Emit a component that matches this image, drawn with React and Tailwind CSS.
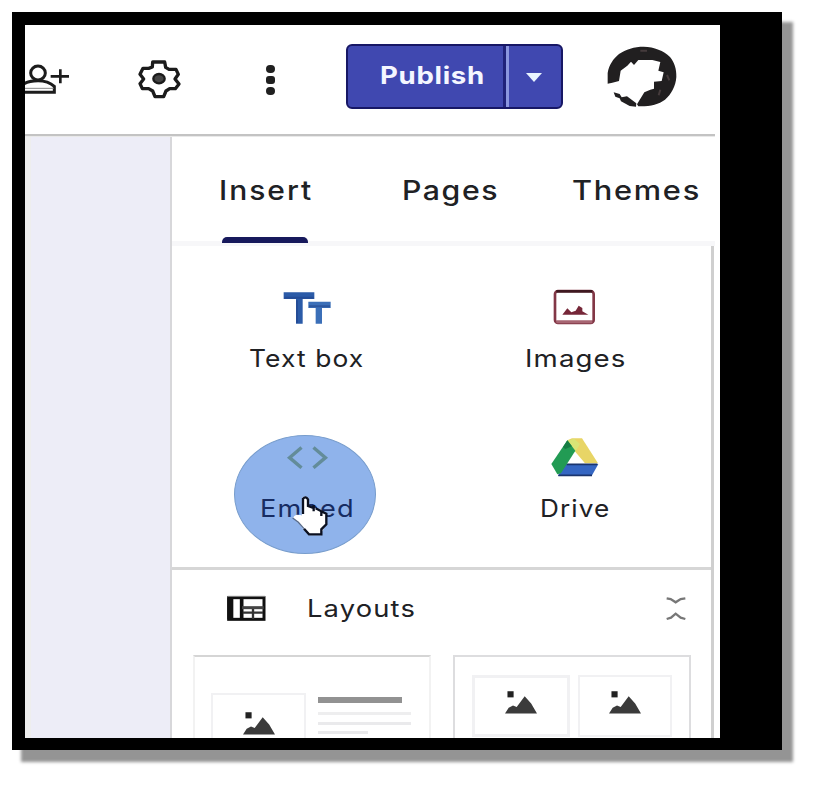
import React from "react";

function PersonAdd() {
  return (
    <svg className="block h-[40px] w-[48px]" viewBox="0 0 144 120" fill="none" stroke="#1c1c1c">
      <ellipse cx="39" cy="45" rx="22" ry="21" strokeWidth="9" />
      <path d="M-14 87 C0 70 22 68 39 68 C60 68 76 74 88 85 V103 H-14 Z" strokeWidth="9" />
      <path d="M0 91H86" strokeWidth="3" stroke="#888" />
      <path d="M106 34V76M77 55H132" strokeWidth="8" />
    </svg>
  );
}

function Gear() {
  return (
    <svg className="block h-[42px] w-[47px]" viewBox="405 182 141 126" fill="none" stroke="#1b1b1b" strokeLinejoin="round">
      <path strokeWidth="10" d="M455 191H491L494 207L504 213H525L532 228L522 242L534 257L523 271H506L495 278L488 295H462L455 278L443 271H424L417 256L428 242L417 228L426 210H443L454 206Z" />
      <ellipse cx="474" cy="241" rx="17" ry="14" fill="#444" strokeWidth="7" />
    </svg>
  );
}

function Avatar() {
  return (
    <svg className="block h-[62px] w-[70px]" viewBox="830 77 210 186">
      <path
        fill="#211f20"
        d="M832 190V158C836 134 848 116 866 101C886 87 912 79 940 79C972 80 1000 91 1019 110C1032 126 1039 146 1038 170C1036 198 1023 222 1004 238C984 252 960 259 924 258L920 252L942 216L960 208L971 205V184L994 182L1000 156L984 151L990 125L966 119L924 119L911 134L902 124L891 136L871 151L866 182L846 187Z"
      />
      <path fill="#211f20" d="M850 216L868 221L874 231L890 228L918 249L917 259L898 257L872 243L868 234L855 229Z" />
      <path d="M930 91H950M1010 164L1017 180M985 225L990 208" stroke="#453b3c" strokeWidth="6" />
    </svg>
  );
}

function TextIcon() {
  return (
    <svg className="block h-[34px] w-[50px]" viewBox="188 64 150 102">
      <path fill="#2b5ba8" d="M190 68H282V88H247V162H227V88H190Z" />
      <path fill="#3b6fb8" d="M264 96H331V115H305V162H286V115H264Z" />
      <path stroke="#1e3d83" strokeWidth="6" d="M192 84H280M266 110H329M230 92V160" fill="none" opacity=".5" />
    </svg>
  );
}

function ImageIcon() {
  return (
    <svg className="block h-[36px] w-[42px]" viewBox="160 55 126 108">
      <rect x="166" y="61" width="116" height="96" rx="9" fill="#fff" stroke="#823746" strokeWidth="8" />
      <path d="M170 62H278" stroke="#3f1820" strokeWidth="8" />
      <path d="M170 153H278" stroke="#a76572" strokeWidth="9" />
      <path fill="#762738" d="M188 132L203 113L215 125L228 120L237 105L248 112V122L266 132Z" />
    </svg>
  );
}

function DriveIcon() {
  return (
    <svg className="block h-[42px] w-[50px]" viewBox="150 51 150 126">
      <path fill="#e8d566" d="M202 61L216 55H246L294 130H255L218 86Z" />
      <path fill="#d9e475" d="M203 63L222 56L240 72L225 97Z" />
      <path fill="#3566c2" d="M192 132H295L275 168H174Z" />
      <path stroke="#1b356e" strokeWidth="5" d="M200 133H292M175 166H276" />
      <path fill="#229b54" d="M202 61L226 92L183 160L172 163L154 132Z" />
      <path fill="#157c43" d="M202 61L216 79L196 87L189 82Z" />
    </svg>
  );
}

function Pointer() {
  return (
    <svg className="block h-[42px] w-[38px]" viewBox="213 225 114 126">
      <path
        fill="#fff"
        stroke="#fff"
        strokeWidth="5"
        strokeLinejoin="round"
        d="M249 234Q257 229 263 236V260L276 265L288 267L302 274L316 279V315L303 335V343H266L251 325L238 308L222 294Q227 282 248 290Z"
      />
      <path fill="none" stroke="#0b1020" strokeWidth="7" d="M249 282V236Q257 227 264 238V258L284 265M281 255V274M287 265L304 274V288M306 275L319 281V313L304 328V343H267L252 326" />
      <path fill="none" stroke="#566a8a" strokeWidth="4" d="M218 294L235 307L252 326" />
    </svg>
  );
}

function Mountain() {
  return (
    <svg className="block h-[24px] w-[34px]" viewBox="0 0 108 78">
      <path fill="#222" d="M10 4H30V24H10Z" />
      <path fill="#3b3b3b" d="M2 76L14 58L28 50L40 55L66 20L87 44L106 76Z" />
    </svg>
  );
}

function LayoutIcon() {
  return (
    <svg className="block h-[26px] w-[39px]" viewBox="0 0 117 78" fill="none" stroke="#111">
      <rect x="5" y="8" width="106" height="65" strokeWidth="9" fill="#fff" />
      <path d="M10 8V73" strokeWidth="18" />
      <path d="M44 8V73" strokeWidth="11" />
      <path d="M45 38H110" strokeWidth="9" stroke="#444" />
      <path d="M78 42V72M47 53H108" strokeWidth="7" stroke="#333" />
      <path d="M2 4H114" strokeWidth="3" stroke="#888" />
    </svg>
  );
}

function Thumb({ children, className }) {
  return <div className={"flex justify-center border-2 border-[#f1f1f3] " + className}>{children}</div>;
}

function Label({ children, className }) {
  return <span className={"inline-block origin-left whitespace-nowrap " + className}>{children}</span>;
}

export default function App() {
  return (
    <div className="h-[788px] w-[819px] overflow-hidden bg-white pt-[12px] pl-[12px] font-['Inter','Liberation_Sans',sans-serif] text-[#202124]">
      <div className="h-[738px] w-[770px] border-t-[13px] border-r-[62px] border-b-[12px] border-l-[13px] border-black bg-white shadow-[10px_11px_3px_1px_#949494]">
        <div className="flex h-[713px] w-[695px] flex-col overflow-hidden">
          <header className="flex h-[112px] shrink-0 items-start">
            <div className="w-[692px]">
              <div className="flex h-[109px]">
                <div className="w-[111px] pt-[33px]"><PersonAdd /></div>
                <div className="w-[130px] pt-[34px]"><Gear /></div>
                <div className="flex w-[80px] flex-col gap-[3px] pt-[40px]">
                  <i className="h-[8px] w-[9px] rounded-full bg-[#202020]" />
                  <i className="h-[8px] w-[9px] rounded-[3px] bg-[#202020]" />
                  <i className="h-[8px] w-[9px] rounded-full bg-[#202020]" />
                </div>
                <div className="w-[261px] pt-[19px]">
                  <div className="flex h-[65px] w-[217px] overflow-hidden rounded-[6px] border-2 border-[#171765] bg-[#4048b0]">
                    <div className="w-[160px] border-r-[3px] border-[#20227a] pt-[14px] pl-[32px] text-[24px] leading-[32px] font-bold text-[#f4f6ff]">
                      <Label className="scale-x-[1.15] tracking-[0.6px]">Publish</Label>
                    </div>
                    <div className="w-[55px] border-l-[3px] border-[#8b96df] pt-[27px] pl-[17px]">
                      <svg className="block h-[9px] w-[16px]" viewBox="0 0 16 9"><path d="M0 0H16L8 9Z" fill="#e9f5ff" /></svg>
                    </div>
                  </div>
                </div>
                <div className="pt-[21px]"><Avatar /></div>
              </div>
              <div className="h-[3px] w-[690px] border-t-2 border-b border-t-[#c3c3c3] border-b-[#e9e9e9]" />
            </div>
          </header>

          <div className="flex h-[601px]">
            <aside className="w-[147px] border-r-2 border-l-[6px] border-r-[#d7d7da] border-l-[#eeeeee] bg-[#ededf7]" />
            <main className="w-[543px]">
              <nav className="flex h-[109px] border-b-[5px] border-[#f7f7f9] pt-[37px] text-[27px] leading-[34px] font-medium">
                <div className="h-[72px] w-[183px] pl-[47px]">
                  <div className="h-[63px]"><Label className="scale-x-[1.11] tracking-[1.8px]">Insert</Label></div>
                  <div className="ml-[3px] h-[6px] w-[86px] rounded-t-[5px] bg-[#17195c]" />
                </div>
                <div className="w-[170px] pl-[47px]"><Label className="scale-x-[1.12] tracking-[1.4px]">Pages</Label></div>
                <div className="pl-[47px]"><Label className="scale-x-[1.14] tracking-[1.5px]">Themes</Label></div>
              </nav>

              <div className="h-[492px] w-[542px] border-r-[3px] border-[#cfcfcf]">
                <section className="flex h-[324px] border-b-[3px] border-[#d6d6d6] text-[24px] leading-[30px]">
                  <div className="w-[270px]">
                    <div className="h-[189px] pt-[45px]">
                      <div className="pl-[111px]"><TextIcon /></div>
                      <div className="pt-[19px] pl-[77px]"><Label className="scale-x-[1.1] tracking-[1px]">Text box</Label></div>
                    </div>
                    <div className="relative ml-[62px] h-[119px] w-[142px] rounded-[50%] border border-[#789dcc] bg-[#8fb3eb]">
                      <svg className="ml-[51px] block h-[37px] w-[43px] pt-[10px] pb-[4px]" viewBox="0 0 129 75" fill="none" stroke="#638c99" strokeWidth="11"><path d="M45 5L6 38L45 71M84 5L123 38L84 71" /></svg>
                      <div className="pt-[21px] pl-[25px] text-[#172c62]"><Label className="scale-x-[1.13] tracking-[1px]">Embed</Label></div>
                      <div className="absolute top-[59px] left-[56px]"><Pointer /></div>
                    </div>
                  </div>
                  <div className="w-[269px]">
                    <div className="h-[191px] pt-[43px]">
                      <div className="pl-[111px]"><ImageIcon /></div>
                      <div className="pt-[19px] pl-[83px]"><Label className="scale-x-[1.15] tracking-[1px]">Images</Label></div>
                    </div>
                    <div className="pl-[108px]"><DriveIcon /></div>
                    <div className="pt-[15px] pl-[98px]"><Label className="scale-x-[1.09] tracking-[1px]">Drive</Label></div>
                  </div>
                </section>

                <section className="flex h-[85px] items-start">
                  <div className="w-[135px] pt-[25px] pl-[55px]"><LayoutIcon /></div>
                  <div className="w-[359px] pt-[24px] text-[24px] leading-[30px]"><Label className="scale-x-[1.14] tracking-[1px]">Layouts</Label></div>
                  <svg className="mt-[26px] block h-[25px] w-[20px]" viewBox="0 0 60 75" fill="none" stroke="#777" strokeWidth="7"><path d="M2 7L14 9L29 19L44 9L58 7M2 69L15 65L29 53L44 65L58 69" /></svg>
                </section>

                <section className="flex h-[83px] gap-[22px] overflow-hidden pl-[21px]">
                  <div className="flex w-[238px] shrink-0 border-2 border-b-0 border-[#f2f2f2] border-t-[#d5d5d5] pt-[36px] pl-[16px]">
                    <Thumb className="h-[50px] w-[95px] border-b-0 pt-[16px]"><Mountain /></Thumb>
                    <div className="flex w-[106px] flex-col pt-[4px] pl-[12px]">
                      <div className="h-[6px] w-[84px] bg-[#929292]" />
                      <div className="mt-[9px] h-[3px] w-[93px] bg-[#eeeeef]" />
                      <div className="mt-[7px] h-[3px] w-[93px] bg-[#eaeaec]" />
                      <div className="mt-[6px] h-[3px] w-[50px] bg-[#e9e9eb]" />
                    </div>
                  </div>
                  <div className="flex w-[238px] shrink-0 gap-[8px] border-2 border-b-0 border-[#dddddf] pt-[18px] pl-[17px]">
                    <Thumb className="h-[62px] w-[98px] border-[3px] pt-[12px]"><Mountain /></Thumb>
                    <Thumb className="h-[62px] w-[94px] pt-[13px]"><Mountain /></Thumb>
                  </div>
                </section>
              </div>
            </main>
          </div>
        </div>
      </div>
    </div>
  );
}
